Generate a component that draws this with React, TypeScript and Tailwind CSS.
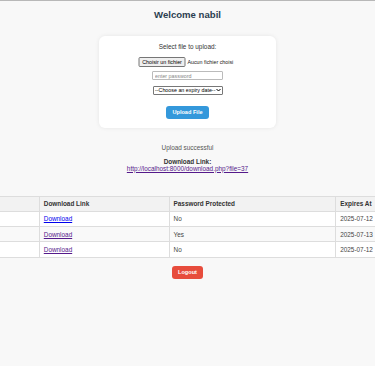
const uploads = [
	{ name: 'rapport.pdf', protectedFile: false, expires: '2025-07-12', visited: false },
	{ name: 'photo.png', protectedFile: true, expires: '2025-07-13', visited: true },
	{ name: 'notes.txt', protectedFile: false, expires: '2025-07-12', visited: true },
];

const App = () => {
	return (
		<div className="min-h-[366px] bg-[#f8f8f8] border-t border-[#b8b8b8] font-['Liberation_Sans',Arial,sans-serif] text-[6.4px] text-[#333] overflow-hidden">
			<h2 className="pt-[9px] text-center text-[9.6px] leading-[10px] font-bold text-[#2c3e50]">
				Welcome nabil
			</h2>

			{/* Upload form */}
			<div className="mx-auto mt-[16px] w-[177px] rounded-[6px] bg-white pt-[7px] pb-[9px] shadow-[0_0_4px_rgba(0,0,0,0.08)] flex flex-col items-center">
				<p className="text-[6.4px] leading-[8px] text-[#333]">Select file to upload:</p>

				<div className="mt-[6px] flex items-center gap-[2px] text-[5.33px] leading-[6.5px] whitespace-nowrap -translate-x-[1.5px]">
					<span className="rounded-[1.5px] border border-[#767676] bg-[#efefef] px-[2.5px] py-[0.5px] text-black">
						Choisir un fichier
					</span>
					<span className="text-[#222]">Aucun fichier choisi</span>
				</div>

				<input
					type="password"
					placeholder="enter password"
					className="mt-[4.5px] h-[9px] w-[71px] rounded-[1px] border border-[#bbb] bg-white px-[2px] text-[5.33px] leading-[7px] placeholder:text-[#888] outline-none"
				/>

				<div className="mt-[6px] flex h-[8.5px] w-[70px] items-center justify-between whitespace-nowrap rounded-[1px] border border-[#777] bg-white pl-[1.5px] pr-[1px] text-[5.33px] leading-[6.5px] text-black">
					<span>--Choose an expiry date--</span>
					<svg className="w-[5px] h-[4px]" viewBox="0 0 10 8" fill="none" stroke="currentColor" strokeWidth="2">
						<path d="M1 2l4 4 4-4" />
					</svg>
				</div>

				<button className="mt-[11.5px] h-[13px] w-[43px] rounded-[3px] bg-[#3498db] text-[5.6px] font-bold text-white">
					Upload File
				</button>
			</div>

			<div className="mt-[16px] flex flex-col items-center">
				<p className="leading-[8px] text-[#555]">Upload successful</p>
				<p className="mt-[5.5px] font-bold leading-[7px] text-[#333]">Download Link:</p>
				<a className="leading-[8px] text-[#551a8b] underline" href="#">
					http://localhost:8000/download.php?file=37
				</a>
			</div>

			{/* Uploads table, wider than the screen */}
			<div className="mt-[23px] flex justify-center">
				<table className="shrink-0 w-[557px] border-collapse text-left leading-[7px]">
					<thead>
						<tr className="bg-[#f2f2f2]">
							<th className="w-[130px] h-[15.25px] border border-[#ddd] px-[4px] font-bold">File Name</th>
							<th className="w-[130px] border border-[#ddd] px-[4px] font-bold">Download Link</th>
							<th className="w-[167px] border border-[#ddd] px-[4px] font-bold">Password Protected</th>
							<th className="w-[130px] border border-[#ddd] px-[4px] font-bold">Expires At</th>
						</tr>
					</thead>
					<tbody>
						{uploads.map((u, i) => (
							<tr key={i} className={i === 1 ? 'bg-[#f9f9f9]' : 'bg-white'}>
								<td className="h-[15.25px] border border-[#ddd] px-[4px]">{u.name}</td>
								<td className="border border-[#ddd] px-[4px]">
									<a href="#" className={u.visited ? 'underline text-[#551a8b]' : 'underline text-[#0000ee]'}>
										Download
									</a>
								</td>
								<td className="border border-[#ddd] px-[4px] text-[#444]">{u.protectedFile ? 'Yes' : 'No'}</td>
								<td className="border border-[#ddd] px-[4px] text-[#444]">{u.expires}</td>
							</tr>
						))}
					</tbody>
				</table>
			</div>

			<div className="mt-[8px] flex justify-center">
				<button className="h-[13px] w-[31px] rounded-[3px] bg-[#e74c3c] text-[5.6px] font-bold text-white">
					Logout
				</button>
			</div>
		</div>
	);
};

export default App;
